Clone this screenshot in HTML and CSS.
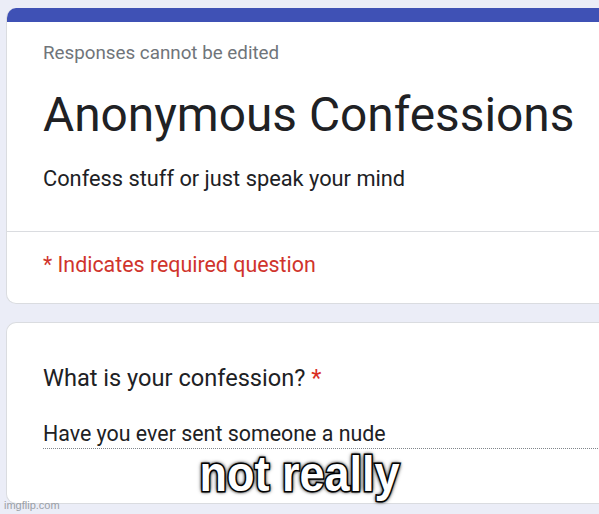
FILE: index.html
```html
<!DOCTYPE html>
<html>
<head>
<meta charset="utf-8">
<link rel="stylesheet" href="styles.css">
</head>
<body>
<div class="page">
  <div class="card header-card">
    <div class="bar"></div>
    <div class="header-main">
      <div class="note">Responses cannot be edited</div>
      <div class="title">Anonymous Confessions</div>
      <div class="desc">Confess stuff or just speak your mind</div>
    </div>
    <div class="required">* Indicates required question</div>
  </div>
  <div class="card question-card">
    <div class="question">What is your confession? <span class="star">*</span></div>
    <div class="answer">Have you ever sent someone a nude</div>
  </div>
</div>
<div class="caption">not really</div>
<div class="watermark">imgflip.com</div>
</body>
</html>
```
FILE: styles.css
```css
html, body {
  margin: 0;
  padding: 0;
}
body {
  width: 599px;
  height: 514px;
  overflow: hidden;
  background: #ebedf7;
  font-family: Roboto, "Noto Sans", sans-serif;
  position: relative;
}
.page {
  padding: 8px 0 0 6px;
  display: flex;
  flex-direction: column;
  gap: 18px;
}
.card {
  background: #fff;
  border: 1px solid #dadce0;
  border-right: none;
  border-radius: 10px 0 0 10px;
  width: 620px;
}
.header-card {
  border-top: none;
  overflow: hidden;
}
.bar {
  height: 14px;
  background: #3f51b5;
}
.header-main {
  padding: 19px 0 38px 36px;
  border-bottom: 1px solid #dadce0;
}
.note {
  color: #70757a;
  font-size: 18.8px;
  line-height: 24px;
}
.title {
  color: #202124;
  font-size: 47.8px;
  line-height: 56px;
  margin-top: 22px;
}
.desc {
  color: #202124;
  font-size: 21.8px;
  line-height: 28px;
  margin-top: 22px;
}
.required {
  color: #d0342c;
  font-size: 21.4px;
  line-height: 28px;
  padding: 19px 0 24px 36px;
}
.question-card {
  height: 182px;
  padding: 40px 0 0 36px;
  box-sizing: border-box;
}
.question {
  color: #202124;
  font-size: 23.6px;
  line-height: 30px;
}
.star {
  color: #d93025;
}
.answer {
  margin-top: 27px;
  color: #202124;
  font-size: 21.4px;
  line-height: 28px;
  border-bottom: 1px dotted #80868b;
}
.caption {
  position: absolute;
  left: 0;
  right: 0;
  top: 446px;
  text-align: center;
  font-family: "Liberation Sans", Arial, sans-serif;
  font-weight: bold;
  font-size: 50px;
  line-height: 56px;
  color: #fff;
  text-shadow: 0 0 2px #000, 0 0 3px #000, 0 0 4px #000, 0 0 6px #000;
  -webkit-text-stroke: 3px #000;
  paint-order: stroke fill;
  transform: scaleX(0.9);
}
.watermark {
  position: absolute;
  left: 4px;
  bottom: 3px;
  font-family: "Liberation Sans", Arial, sans-serif;
  font-size: 11px;
  color: #9aa0a6;
}
```
